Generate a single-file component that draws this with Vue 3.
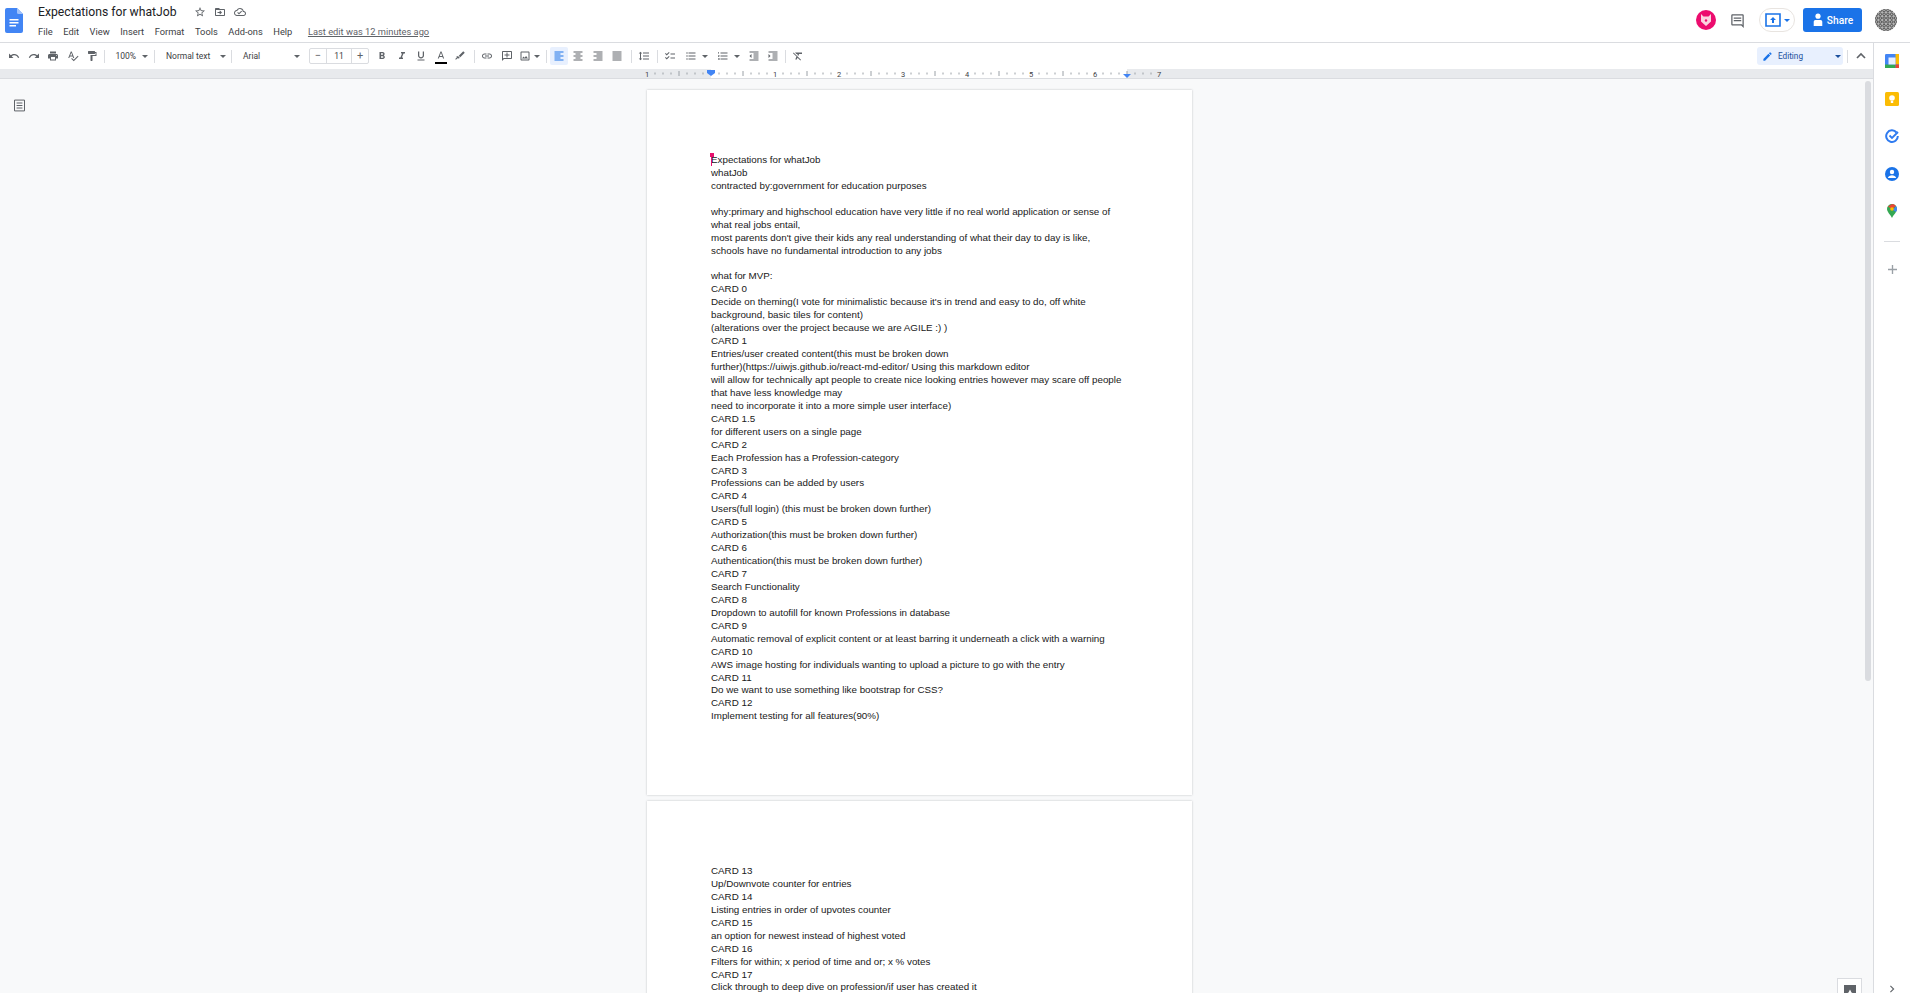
<template>
  <div class="app">
    <header class="topbar">
      <svg class="logo" viewBox="0 0 18 25" width="18" height="25">
        <path d="M2 0h10l6 6v17a2 2 0 0 1-2 2H2a2 2 0 0 1-2-2V2a2 2 0 0 1 2-2z" fill="#4285f4" />
        <path d="M12 0l6 6h-4.500A1.500 1.500 0 0 1 12 4.500z" fill="#a1c2fa" />
        <path d="M4.500 11h9v1.500h-9zM4.500 14h9v1.500h-9zM4.500 17h6.500v1.500h-6.500z" fill="#fff" />
      </svg>
      <div class="titles">
        <div class="title-row">
          <span class="doc-title">Expectations for whatJob</span>
          <svg class="ic title-ic" viewBox="0 0 24 24"><path :d="icons.star" /></svg>
          <svg class="ic title-ic" viewBox="0 0 24 24"><path :d="icons.folder" /></svg>
          <svg class="ic title-ic" viewBox="0 0 24 24"><path :d="icons.cloud" /></svg>
        </div>
        <nav class="menu">
          <span v-for="m in menus" :key="m">{{ m }}</span>
          <span class="last-edit">Last edit was 12 minutes ago</span>
        </nav>
      </div>
      <div class="top-right">
        <svg class="fox" viewBox="0 0 20 20" width="20" height="20">
          <circle cx="10" cy="10" r="10" fill="#ec0c6e" />
          <path d="M5 4l2.500 2.500h5L15 4v7.500L10 16l-5-4.500z" fill="#fbd3e0" />
          <circle cx="10" cy="10.500" r="1.200" fill="#ec0c6e" />
        </svg>
        <svg class="ic comment" viewBox="0 0 24 24"><path :d="icons.comment" /></svg>
        <div class="present">
          <svg viewBox="0 0 16 14" width="16" height="14">
            <path d="M1 1h14v12H1z" fill="none" stroke="#1a73e8" stroke-width="1.600" />
            <path d="M8 4l3 3H9v3H7V7H5z" fill="#1a73e8" />
          </svg>
          <i class="caret blue"></i>
        </div>
        <button class="share">
          <svg viewBox="0 0 14 16" width="12" height="14">
            <circle cx="7" cy="3.500" r="3" fill="#fff" />
            <path d="M2 15V10q0-2 2-2h6q2 0 2 2v5z" fill="#fff" />
          </svg>
          Share
        </button>
        <svg class="me" viewBox="0 0 22 22" width="22" height="22">
          <defs>
            <clipPath id="meclip"><circle cx="11" cy="11" r="11" /></clipPath>
          </defs>
          <g clip-path="url(#meclip)">
            <rect width="22" height="22" fill="#b4b4b4" />
            <template v-for="r in 6" :key="r">
              <circle v-for="c in 6" :key="c" :cx="c * 3.800 - 2.300" :cy="r * 3.800 - 2.300" r="1.300" fill="none" stroke="#4a4a4a" stroke-width=".9" />
            </template>
          </g>
        </svg>
      </div>
    </header>

    <div class="body">
      <div class="workspace">
        <div class="toolbar">
          <template v-for="(t, i) in tools" :key="i">
            <span v-if="t.sep" class="sep" :style="{ marginLeft: t.l + 'px', marginRight: t.r + 'px' }"></span>
            <div v-else-if="t.label" class="drop" :style="{ width: t.w + 'px', paddingLeft: t.p + 'px' }">
              <span>{{ t.label }}</span>
              <i class="caret"></i>
            </div>
            <div v-else-if="t.size" class="size">
              <span class="size-btn">−</span>
              <span class="size-val">11</span>
              <span class="size-btn">+</span>
            </div>
            <div v-else class="tool" :class="{ on: t.on, wide: t.w > 30 }" :style="{ width: t.w + 'px', marginLeft: (t.l || 0) + 'px' }">
              <svg class="ic" viewBox="0 0 24 24"><path v-for="d in t.d" :key="d" :d="d" /></svg>
              <i v-if="t.caret" class="caret small"></i>
              <b v-if="t.color" class="color-bar"></b>
            </div>
          </template>

          <div class="toolbar-end">
            <div class="mode">
              <svg class="ic pen" viewBox="0 0 24 24"><path :d="icons.edit" /></svg>
              <span>Editing</span>
              <i class="caret mode-caret"></i>
            </div>
            <span class="sep end-sep"></span>
            <svg class="chev" viewBox="0 0 24 24" width="16" height="16"><path d="M6 15l6-6 6 6" fill="none" stroke="#5f6368" stroke-width="2.500" /></svg>
          </div>
        </div>

        <div class="ruler">
          <svg class="ruler-svg" width="550" height="9" viewBox="0 0 550 9">
            <rect x="64" y="0" width="416" height="9" fill="#fff" />
            <template v-for="n in ticks" :key="n.x">
              <line :x1="n.x" :x2="n.x" :y1="n.major ? 2 : 3.500" :y2="n.major ? 7 : 5.500" stroke="#9aa0a6" stroke-width="1" />
            </template>
            <text v-for="n in rulerNums" :key="n.x" :x="n.x" y="7.500" class="ruler-num">{{ n.t }}</text>
            <path d="M60 1h8v3l-4 3-4-3z" fill="#4285f4" />
            <path d="M476 5h8l-4 4z" fill="#4285f4" />
          </svg>
        </div>

        <main class="canvas">
          <svg class="ic outline" viewBox="0 0 18 18">
            <path d="M3 2.500h12v13H3zM5.500 6h7M5.500 9h7M5.500 12h7" fill="none" stroke="#5f6368" stroke-width="1.200" />
          </svg>
          <section v-for="(pg, i) in pages" :key="i" class="page">
            <div v-for="(line, j) in pg" :key="j" class="line">{{ line || '\u00a0' }}</div>
          </section>
          <i class="cursor"></i>
          <div class="thumb"></div>
          <div class="explore">
            <b>
              <svg viewBox="0 0 12 12" width="12" height="12"><path d="M6 1.500L7.500 4.500 10.500 6 7.500 7.500 6 10.500 4.500 7.500 1.500 6 4.500 4.500z" fill="#fff" /></svg>
            </b>
          </div>
        </main>
      </div>

      <aside class="side">
        <svg viewBox="0 0 16 16" width="14" height="14">
          <rect width="16" height="16" rx="1.500" fill="#4285f4" />
          <rect x="12" width="4" height="12" fill="#fbbc04" />
          <rect y="12" width="12" height="4" fill="#34a853" />
          <rect x="12" y="12" width="4" height="4" fill="#ea4335" />
          <rect x="4" y="4" width="8" height="8" fill="#e8f0fe" />
        </svg>
        <svg viewBox="0 0 14 14" width="14" height="14">
          <rect width="14" height="14" rx="1.500" fill="#fbbc04" />
          <circle cx="7" cy="6" r="2.800" fill="#fff" />
          <rect x="5.800" y="9" width="2.400" height="2" fill="#fff" />
        </svg>
        <svg viewBox="0 0 14 14" width="14" height="14">
          <path d="M11.500 3.500A5.800 5.800 0 1 0 12.800 7" fill="none" stroke="#2f7bf0" stroke-width="2" />
          <path d="M4.500 6.500L7 9l6-6" fill="none" stroke="#2f7bf0" stroke-width="1.800" />
        </svg>
        <svg viewBox="0 0 14 14" width="14" height="14">
          <circle cx="7" cy="7" r="7" fill="#1a73e8" />
          <circle cx="7" cy="5" r="2.200" fill="#fff" />
          <path d="M2.800 11c.5-2 2.500-2.800 4.200-2.800s3.700.8 4.200 2.800z" fill="#fff" />
        </svg>
        <svg viewBox="0 0 10 14" width="10" height="14">
          <path d="M5 0a5 5 0 0 1 5 5c0 3-3 5-5 9-2-4-5-6-5-9a5 5 0 0 1 5-5z" fill="#34a853" />
          <path d="M1 2.500L5 0a5 5 0 0 1 4 2L5 5z" fill="#ea4335" />
          <path d="M9 2a5 5 0 0 1 1 3c0 1-.5 2-1 3L6 6z" fill="#4285f4" />
          <circle cx="5" cy="5" r="1.800" fill="#fbbc04" />
        </svg>
        <span class="side-sep"></span>
        <svg viewBox="0 0 10 10" width="9" height="9"><path d="M5 0v10M0 5h10" stroke="#9aa0a6" stroke-width="1.500" /></svg>
        <svg class="side-next" viewBox="0 0 10 10" width="8" height="8"><path d="M3 1l4 4-4 4" fill="none" stroke="#5f6368" stroke-width="1.400" /></svg>
      </aside>
    </div>
  </div>
</template>

<script setup>
// Material icon paths
const icons = {
  undo: 'M12.5 8c-2.65 0-5.05.99-6.9 2.6L2 7v9h9l-3.62-3.62c1.39-1.16 3.16-1.88 5.12-1.88 3.54 0 6.55 2.31 7.6 5.5l2.37-.78C21.08 11.03 17.15 8 12.5 8z',
  redo: 'M18.4 10.6C16.55 8.99 14.15 8 11.5 8c-4.65 0-8.58 3.03-9.96 7.22L3.9 16c1.05-3.19 4.05-5.5 7.6-5.5 1.95 0 3.73.72 5.12 1.88L13 16h9V7l-3.6 3.6z',
  print: 'M19 8H5c-1.66 0-3 1.34-3 3v6h4v4h12v-4h4v-6c0-1.66-1.34-3-3-3zm-3 11H8v-5h8v5zm3-7c-.55 0-1-.45-1-1s.45-1 1-1 1 .45 1 1-.45 1-1 1zm-1-9H6v4h12V3z',
  spell: 'M12.45 16h2.09L9.43 3H7.57L2.46 16h2.09l1.12-3h5.64l1.14 3zm-6.02-5L8.5 5.48 10.57 11H6.43zm15.16.59l-8.09 8.09L9.83 16l-1.41 1.41 5.09 5.09L23 13l-1.41-1.41z',
  paint: 'M18 4V3c0-.55-.45-1-1-1H5c-.55 0-1 .45-1 1v4c0 .55.45 1 1 1h12c.55 0 1-.45 1-1V6h1v4H9v11c0 .55.45 1 1 1h2c.55 0 1-.45 1-1v-9h8V4h-3z',
  star: 'M22 9.24l-7.19-.62L12 2 9.19 8.63 2 9.24l5.46 4.73L5.82 21 12 17.27 18.18 21l-1.63-7.03L22 9.24zM12 15.4l-3.76 2.27 1-4.28-3.32-2.88 4.38-.38L12 6.1l1.71 4.04 4.38.38-3.32 2.88 1 4.28L12 15.4z',
  folder: 'M20 6h-8l-2-2H4c-1.1 0-2 .9-2 2v12c0 1.1.9 2 2 2h16c1.1 0 2-.9 2-2V8c0-1.1-.9-2-2-2zm0 12H4V8h16v10zM12 17l4-4-4-4-1.400 1.400 1.600 1.600H7v2h5.200l-1.600 1.600z',
  cloud: 'M19.35 10.04C18.67 6.59 15.64 4 12 4 9.11 4 6.6 5.64 5.35 8.04 2.34 8.36 0 10.91 0 14c0 3.31 2.69 6 6 6h13c2.76 0 5-2.24 5-5 0-2.64-2.05-4.78-4.65-4.96zM19 18H6c-2.21 0-4-1.79-4-4 0-2.05 1.53-3.76 3.56-3.97l1.07-.11.5-.95C8.08 7.14 9.94 6 12 6c2.62 0 4.88 1.86 5.39 4.43l.3 1.5 1.53.11c1.56.1 2.78 1.41 2.78 2.96 0 1.65-1.35 3-3 3zm-9-3.82l-2.09-2.09L6.5 13.5 10 17l6.01-6.01-1.41-1.41z',
  comment: 'M20 2H4c-1.1 0-2 .9-2 2v14c0 1.1.9 2 2 2h14l4 4V4c0-1.1-.9-2-2-2zm0 17.170L18.830 18H4V4h16v15.170zM6 7h12v2H6zM6 11h12v2H6z',
  edit: 'M3 17.25V21h3.75L17.81 9.94l-3.75-3.75L3 17.25zM20.71 7.04c.39-.39.39-1.02 0-1.41l-2.34-2.34c-.39-.39-1.02-.39-1.41 0l-1.83 1.83 3.75 3.75 1.83-1.83z'
}

const menus = ['File', 'Edit', 'View', 'Insert', 'Format', 'Tools', 'Add-ons', 'Help']

const btn = (d, w = 19.5, extra = {}) => ({ d: Array.isArray(d) ? d : [d], w, ...extra })
const sep = (l, r) => ({ sep: true, l, r })

// Anchos sacados de la captura, cada entrada es un boton de la barra
const tools = [
  btn(icons.undo, 19.5, { l: 4.25 }),
  btn(icons.redo),
  btn(icons.print),
  btn(icons.spell),
  btn(icons.paint),
  sep(2.25, 3),
  { label: '100%', w: 45, p: 7.5 },
  sep(1, 3),
  { label: 'Normal text', w: 73, p: 8 },
  sep(0, 3),
  { label: 'Arial', w: 70, p: 8 },
  { size: true },
  btn('M15.6 10.79c.97-.67 1.65-1.77 1.65-2.79 0-2.26-1.75-4-4-4H7v14h7.04c2.09 0 3.71-1.7 3.71-3.79 0-1.52-.86-2.82-2.15-3.42zM10 6.5h3c.83 0 1.5.67 1.5 1.5s-.67 1.5-1.5 1.5h-3v-3zm3.5 9H10v-3h3.5c.83 0 1.5.67 1.5 1.5s-.67 1.5-1.5 1.5z', 19.5, { l: 3.5 }),
  btn('M10 4v3h2.21l-3.42 8H6v3h8v-3h-2.21l3.42-8H18V4z'),
  btn('M12 17c3.31 0 6-2.69 6-6V3h-2.5v8c0 1.93-1.57 3.5-3.5 3.5S8.5 12.93 8.5 11V3H6v8c0 3.31 2.69 6 6 6zm-7 2v2h14v-2H5z'),
  btn('M11 3L5.500 17h2.200l1.100-3h6.200l1.100 3h2.200L13 3h-2zm-1.500 9L12 5.300 14.500 12h-5z', 19.5, { color: true }),
  btn('M18.500 2.500l3 3-9 9-3-3zM8.500 12.500l3 3-1.500 1.500-3-.500-2.500 2.500-2.500-.500 3.500-3.500-.500-2.500z'),
  sep(3.5, 3),
  btn('M3.9 12c0-1.71 1.39-3.1 3.1-3.1h4V7H7c-2.76 0-5 2.24-5 5s2.24 5 5 5h4v-1.9H7c-1.71 0-3.1-1.39-3.1-3.1zM8 13h8v-2H8v2zm9-6h-4v1.9h4c1.71 0 3.1 1.39 3.1 3.1s-1.39 3.1-3.1 3.1h-4V17h4c2.76 0 5-2.24 5-5s-2.24-5-5-5z'),
  btn(['M20 2H4c-1.1 0-2 .9-2 2v18l4-4h14c1.1 0 2-.9 2-2V4c0-1.1-.9-2-2-2zm0 14H5.17L4 17.17V4h16v12z', 'M13 5h-2v4H7v2h4v4h2v-4h4V9h-4z']),
  btn(['M19 5v14H5V5h14m0-2H5c-1.1 0-2 .9-2 2v14c0 1.1.9 2 2 2h14c1.1 0 2-.9 2-2V5c0-1.1-.9-2-2-2z', 'M14.14 11.86l-3 3.87L9 13.14 6 17h12l-3.86-5.14z'], 25.5, { caret: true }),
  sep(3.5, 3.5),
  btn('M3 3h18v2H3zM3 7h12v2H3zM3 11h18v2H3zM3 15h12v2H3zM3 19h18v2H3z', 18, { on: true }),
  btn('M3 3h18v2H3zM7 7h10v2H7zM3 11h18v2H3zM7 15h10v2H7zM3 19h18v2H3z', 19.5, { l: .5 }),
  btn('M3 3h18v2H3zM9 7h12v2H9zM3 11h18v2H3zM9 15h12v2H9zM3 19h18v2H3z'),
  btn('M3 3h18v2H3zM3 7h18v2H3zM3 11h18v2H3zM3 15h18v2H3zM3 19h18v2H3z'),
  sep(3.5, 2.5),
  btn('M6 7h2.500L5 3.500 1.500 7H4v10H1.500L5 20.500 8.500 17H6V7zm4-2v2h12V5H10zm0 14h12v-2H10v2zm0-6h12v-2H10v2z'),
  sep(3.5, 2.5),
  btn('M22 7h-9v2h9V7zm0 8h-9v2h9v-2zM5.540 11L2 7.460l1.410-1.410 2.120 2.120 4.240-4.240 1.410 1.410L5.540 11zm0 8L2 15.460l1.410-1.410 2.120 2.120 4.240-4.240 1.410 1.410L5.540 19z'),
  btn('M4 10.500c-.83 0-1.500.67-1.500 1.500s.67 1.500 1.500 1.500 1.500-.67 1.500-1.500-.67-1.500-1.500-1.500zm0-6c-.83 0-1.500.67-1.500 1.500S3.170 7.500 4 7.500 5.500 6.830 5.500 6 4.830 4.500 4 4.500zm0 12c-.83 0-1.500.68-1.500 1.500s.68 1.500 1.500 1.500 1.500-.68 1.500-1.500-.67-1.500-1.500-1.500zM7 19h14v-2H7v2zm0-6h14v-2H7v2zm0-8v2h14V5H7z', 32, { caret: true }),
  btn('M2 17h2v.500H3v1h1v.500H2v1h3v-4H2v1zm1-9h1V4H2v1h1v3zm-1 3h1.800L2 13.100v.900h3v-1H3.200L5 10.900V10H2v1zm5-6v2h14V5H7zm0 14h14v-2H7v2zm0-6h14v-2H7v2z', 32, { caret: true }),
  btn('M11 17h10v-2H11v2zm-8-5l4 4V8l-4 4zm0 9h18v-2H3v2zM3 3v2h18V3H3zm8 6h10V7H11v2zm0 4h10v-2H11v2z'),
  btn('M3 21h18v-2H3v2zM3 8v8l4-4-4-4zm8 9h10v-2H11v2zM3 3v2h18V3H3zm8 6h10V7H11v2zm0 4h10v-2H11v2z'),
  sep(1.5, 2.5),
  btn('M3.270 5L2 6.270l6.970 6.970L6.500 19h3l1.570-3.660L16.730 21 18 19.730 3.550 5.270 3.270 5zM6 5v.180L8.820 8h2.400l-.720 1.680 2.100 2.100L14.210 8H20V5H6z')
]

// Regla: 64px por pulgada, una marca cada 8px
const ticks = []
for (let x = 8; x <= 512; x += 8) {
  if (x % 64 !== 0) ticks.push({ x, major: x % 32 === 0 })
}
const rulerNums = [
  { x: 0, t: '1' }, { x: 128, t: '1' }, { x: 192, t: '2' }, { x: 256, t: '3' },
  { x: 320, t: '4' }, { x: 384, t: '5' }, { x: 448, t: '6' }, { x: 512, t: '7' }
]

const pages = [
  [
    'Expectations for whatJob',
    'whatJob',
    'contracted by:government for education purposes',
    '',
    'why:primary and highschool education have very little if no real world application or sense of',
    'what real jobs entail,',
    "most parents don't give their kids any real understanding of what their day to day is like,",
    'schools have no fundamental introduction to any jobs',
    '',
    'what for MVP:',
    'CARD 0',
    "Decide on theming(I vote for minimalistic because it's in trend and easy to do, off white",
    'background, basic tiles for content)',
    '(alterations over the project because we are AGILE :) )',
    'CARD 1',
    'Entries/user created content(this must be broken down',
    'further)(https://uiwjs.github.io/react-md-editor/ Using this markdown editor',
    'will allow for technically apt people to create nice looking entries however may scare off people',
    'that have less knowledge may',
    'need to incorporate it into a more simple user interface)',
    'CARD 1.5',
    'for different users on a single page',
    'CARD 2',
    'Each Profession has a Profession-category',
    'CARD 3',
    'Professions can be added by users',
    'CARD 4',
    'Users(full login) (this must be broken down further)',
    'CARD 5',
    'Authorization(this must be broken down further)',
    'CARD 6',
    'Authentication(this must be broken down further)',
    'CARD 7',
    'Search Functionality',
    'CARD 8',
    'Dropdown to autofill for known Professions in database',
    'CARD 9',
    'Automatic removal of explicit content or at least barring it underneath a click with a warning',
    'CARD 10',
    'AWS image hosting for individuals wanting to upload a picture to go with the entry',
    'CARD 11',
    'Do we want to use something like bootstrap for CSS?',
    'CARD 12',
    'Implement testing for all features(90%)'
  ],
  [
    'CARD 13',
    'Up/Downvote counter for entries',
    'CARD 14',
    'Listing entries in order of upvotes counter',
    'CARD 15',
    'an option for newest instead of highest voted',
    'CARD 16',
    'Filters for within; x period of time and or; x % votes',
    'CARD 17',
    'Click through to deep dive on profession/if user has created it'
  ]
]
</script>

<style>
html, body {
  margin: 0;
  overflow: hidden;
}
</style>

<style scoped>
.app {
  width: 1910px;
  height: 993px;
  display: flex;
  flex-direction: column;
  overflow: hidden;
  background: #fff;
  font-family: Roboto, "Liberation Sans", sans-serif;
  color: #3c4043;
}
.ic {
  width: 12px;
  height: 12px;
  fill: #5f6368;
  flex: none;
}
.topbar {
  height: 42px;
  flex: none;
  display: flex;
  border-bottom: 1px solid #dadce0;
  box-sizing: content-box;
}
.logo {
  margin: 8px 15px 0 5px;
}
.titles {
  padding-top: 3px;
}
.title-row {
  display: flex;
  align-items: center;
  height: 18px;
}
.doc-title {
  font-size: 12.2px;
  color: #202124;
  width: 155.5px;
  white-space: nowrap;
}
.title-ic {
  margin-right: 8px;
}
.menu {
  display: flex;
  align-items: center;
  gap: 10.6px;
  height: 20px;
  font-size: 9.3px;
  color: #3c4043;
}
.last-edit {
  margin-left: 5px;
  color: #5f6368;
  text-decoration: underline;
}
.top-right {
  margin-left: auto;
  display: flex;
  align-items: center;
  height: 40px;
  padding-right: 13px;
}
.fox {
  margin-right: 1px;
}
.comment {
  width: 15px;
  height: 15px;
  margin-left: 13px;
}
.present {
  width: 36px;
  height: 24px;
  box-sizing: border-box;
  margin-left: 14px;
  border: 1px solid #e8e4e0;
  border-radius: 12px;
  display: flex;
  align-items: center;
  justify-content: center;
  gap: 3px;
}
.share {
  width: 59px;
  height: 24px;
  margin-left: 8px;
  padding: 0;
  border: none;
  border-radius: 3px;
  background: #1a73e8;
  color: #fff;
  display: flex;
  align-items: center;
  justify-content: center;
  gap: 3px;
  font: 500 10.2px Roboto, sans-serif;
}
.me {
  margin-left: 13px;
}
.caret {
  display: inline-block;
  width: 0;
  height: 0;
  border: 3px solid transparent;
  border-top: 3.5px solid #5f6368;
  border-bottom: none;
}
.caret.blue {
  border-top-color: #1a73e8;
}
.caret.small {
  margin-left: 3px;
}
.tool.wide .caret.small {
  margin-left: 5px;
}
.body {
  flex: 1;
  display: flex;
  min-height: 0;
}
.workspace {
  flex: 1;
  min-width: 0;
  display: flex;
  flex-direction: column;
}
.toolbar {
  height: 26px;
  flex: none;
  display: flex;
  align-items: center;
}
.tool {
  height: 18px;
  flex: none;
  display: flex;
  align-items: center;
  justify-content: center;
  position: relative;
  border-radius: 2px;
}
.tool.on {
  background: #e8f0fe;
}
.tool.on .ic {
  fill: #1a73e8;
}
.color-bar {
  position: absolute;
  left: 4px;
  right: 4px;
  bottom: 1px;
  height: 2px;
  background: #000;
}
.sep {
  width: 1px;
  height: 13px;
  flex: none;
  background: #dadce0;
}
.drop {
  height: 18px;
  flex: none;
  box-sizing: border-box;
  display: flex;
  align-items: center;
  justify-content: space-between;
  padding-right: 5px;
  font-size: 8.5px;
  color: #3c4043;
}
.size {
  width: 60px;
  height: 16px;
  flex: none;
  margin-left: 4px;
  box-sizing: border-box;
  border: 1px solid #dadce0;
  border-radius: 2px;
  display: flex;
  font-size: 8.5px;
  line-height: 14px;
  text-align: center;
}
.size-btn {
  width: 16px;
  font-size: 11px;
  color: #5f6368;
}
.size-val {
  flex: 1;
  border-left: 1px solid #dadce0;
  border-right: 1px solid #dadce0;
}
.toolbar-end {
  margin-left: auto;
  display: flex;
  align-items: center;
  padding-right: 4px;
}
.mode {
  width: 86px;
  height: 18px;
  box-sizing: border-box;
  padding: 0 2px 0 5px;
  border-radius: 3px;
  background: #e8f0fe;
  display: flex;
  align-items: center;
  gap: 5px;
  font-size: 8.2px;
  color: #1a4f9c;
}
.pen {
  width: 11px;
  height: 11px;
  fill: #1a73e8;
}
.mode-caret {
  margin-left: auto;
  border-top-color: #1a4f9c;
}
.end-sep {
  margin: 0 5px 0 4px;
}
.ruler {
  height: 10px;
  flex: none;
  background: #e8eaed;
  border-bottom: 1px solid #dadce0;
  box-sizing: border-box;
}
.ruler-svg {
  display: block;
  margin-left: 647px;
  overflow: visible;
}
.ruler-num {
  font: 7.5px Roboto, sans-serif;
  fill: #3c4043;
  text-anchor: middle;
}
.canvas {
  flex: 1;
  min-height: 0;
  position: relative;
  overflow: hidden;
  background: #f8f9fa;
  padding: 11px 0 0 647px;
}
.outline {
  position: absolute;
  left: 12px;
  top: 19px;
  width: 15px;
  height: 15px;
}
.page {
  width: 545px;
  height: 705px;
  box-sizing: border-box;
  margin-bottom: 6px;
  padding: 64px 64px 0;
  background: #fff;
  box-shadow: 0 0 2px rgba(60, 64, 67, .3);
  font-family: "Liberation Sans", Arial, sans-serif;
  font-size: 9.8px;
  line-height: 12.94px;
  color: #202020;
  white-space: nowrap;
}
.cursor {
  position: absolute;
  left: 711px;
  top: 74px;
  width: 1px;
  height: 13px;
  background: #e6106e;
}
.cursor::before {
  content: "";
  position: absolute;
  left: -1px;
  top: 0;
  width: 4px;
  height: 4px;
  background: #e6106e;
}
.thumb {
  position: absolute;
  right: 2px;
  top: 2px;
  width: 6px;
  height: 600px;
  border-radius: 3px;
  background: #dadce0;
}
.explore {
  position: absolute;
  left: 1837px;
  top: 899px;
  width: 25px;
  height: 25px;
  box-sizing: border-box;
  background: #fff;
  border: 1px solid #dadce0;
  display: flex;
  justify-content: center;
  padding-top: 6px;
}
.explore b {
  width: 12px;
  height: 12px;
  background: #5f6368;
}
.side {
  width: 36px;
  flex: none;
  position: relative;
  display: flex;
  flex-direction: column;
  align-items: center;
  gap: 23.5px;
  padding-top: 11px;
  border-left: 1px solid #dadce0;
  box-sizing: content-box;
}
.side-sep {
  width: 16px;
  height: 1px;
  background: #dadce0;
  margin: -1px 0 0;
}
.side-next {
  position: absolute;
  bottom: 0;
  left: 14px;
}
</style>
